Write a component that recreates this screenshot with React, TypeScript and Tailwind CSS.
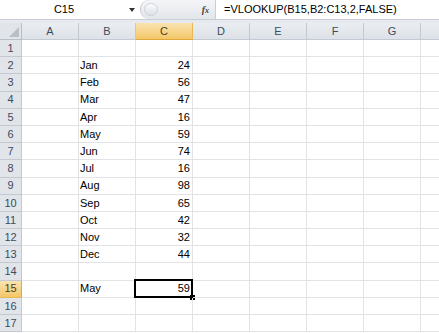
import React from 'react'

const cols = ['A', 'B', 'C', 'D', 'E', 'F', 'G']
const data: Record<number, [string, number]> = {
  2: ['Jan', 24], 3: ['Feb', 56], 4: ['Mar', 47], 5: ['Apr', 16], 6: ['May', 59], 7: ['Jun', 74],
  8: ['Jul', 16], 9: ['Aug', 98], 10: ['Sep', 65], 11: ['Oct', 42], 12: ['Nov', 32], 13: ['Dec', 44],
  15: ['May', 59],
}
const rows = Array.from({ length: 17 }, (_, i) => i + 1)

export default function App() {
  return (
    <div className="w-[439px] h-[333px] overflow-hidden bg-white text-[11px] text-black" style={{ fontFamily: '"Liberation Sans", Arial, sans-serif' }}>
      {/* formula bar */}
      <div className="flex h-[20px] border-b border-[#c9ced6] bg-white">
        <div className="relative w-[140px] flex items-center justify-center pr-[16px]">
          <span className="ml-[4px]">C15</span>
          <span className="absolute right-[5px] top-[8px] w-0 h-0 border-l-[3px] border-r-[3px] border-t-[4px] border-l-transparent border-r-transparent border-t-[#333]" />
        </div>
        <div className="w-[75px] flex items-center bg-gradient-to-b from-[#f4f5f7] to-[#e3e6ea] rounded-l-[9px] border-l border-[#c5cad2]">
          <div className="ml-[3px] w-[14px] h-[13px] rounded-full bg-gradient-to-b from-[#fafbfc] to-[#dde1e6] border border-[#cdd2d9]" />
          <span className="ml-auto mr-[6px] italic font-bold text-[#444] text-[10px]" style={{ fontFamily: '"Liberation Serif", serif' }}>f<span className="text-[8px]">x</span></span>
        </div>
        <div className="flex-1 flex items-center pl-[8px] border-l border-[#c9ced6]">=VLOOKUP(B15,B2:C13,2,FALSE)</div>
      </div>
      <div className="h-[3px] bg-[#e6e9ed]" />
      {/* column headers */}
      <div className="flex h-[17px] text-[#3d4b5e]">
        <div className="relative w-[22px] shrink-0 bg-[#e1e5ea] border-r border-b border-[#b8bec7]">
          <svg className="absolute right-[2px] bottom-[2px]" width="10" height="10" viewBox="0 0 10 10"><polygon points="10,0 10,10 0,10" fill="#b9bfc7" /></svg>
        </div>
        {cols.map(c => (
          <div key={c} className={`w-[57px] shrink-0 flex items-center justify-center border-r border-b ${c === 'C' ? 'bg-gradient-to-b from-[#f9e4b0] to-[#f3c766] border-b-[#e2a93a] border-r-[#e7b957] text-[#514020]' : 'bg-gradient-to-b from-[#eaedf1] to-[#dde2e8] border-[#c3c9d1]'}`}>{c}</div>
        ))}
        <div className="flex-1 bg-gradient-to-b from-[#eaedf1] to-[#dde2e8] border-b border-[#c3c9d1]" />
      </div>
      {/* grid */}
      {rows.map(r => {
        const d = data[r]
        const sel = r === 15
        return (
          <div key={r} className="flex h-[17.2px]">
            <div className={`w-[22px] shrink-0 flex items-center justify-center border-r border-b ${sel ? 'bg-gradient-to-b from-[#f9e4b0] to-[#f3c766] border-r-[#e2a93a] border-b-[#e7b957] text-[#514020]' : 'bg-[#e1e5ea] border-[#c3c9d1] text-[#3d4b5e]'}`}>{r}</div>
            {cols.map(c => (
              <div key={c} className="relative w-[57px] shrink-0 border-r border-b border-[#e1e3e6] flex items-center">
                {c === 'B' && d && <span className="pl-[1px]">{d[0]}</span>}
                {c === 'C' && d && <span className="ml-auto pr-[2px]">{d[1]}</span>}
                {c === 'C' && sel && (
                  <>
                    <div className="absolute left-[-2px] top-[-2px] right-[-1px] bottom-[-1px] border-2 border-black" />
                    <div className="absolute right-[-3px] bottom-[-3px] w-[5px] h-[5px] bg-black" />
                  </>
                )}
              </div>
            ))}
            <div className="flex-1 border-b border-[#e1e3e6]" />
          </div>
        )
      })}
    </div>
  )
}
